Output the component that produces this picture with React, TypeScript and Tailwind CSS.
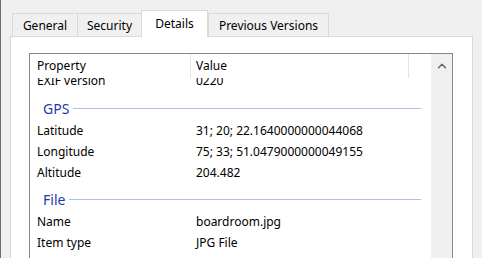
import { ChevronUp } from "lucide-react";

type Row = { label: string; value: string };

const gps: Row[] = [
  { label: "Latitude", value: "31; 20; 22.1640000000044068" },
  { label: "Longitude", value: "75; 33; 51.0479000000049155" },
  { label: "Altitude", value: "204.482" },
];

const file: Row[] = [
  { label: "Name", value: "boardroom.jpg" },
  { label: "Item type", value: "JPG File" },
];

function PropRow({ row }: { row: Row }) {
  return (
    <div className="flex h-[21px] items-center text-[12px] text-black">
      <div className="w-[161px] shrink-0 pl-[7px]">{row.label}</div>
      <div className="pl-[5px] whitespace-nowrap">{row.value}</div>
    </div>
  );
}

function Group({ title }: { title: string }) {
  return (
    <div className="flex h-[28px] items-center pt-[5px] pl-[13px] pr-[10px]">
      <span className="text-[14px] leading-[21px] text-[#1e3ca5]">{title}</span>
      <div className="ml-[4px] h-px flex-1 bg-[#aebfe6]" />
    </div>
  );
}

function Tab({ label, width, selected, last }: { label: string; width: string; selected?: boolean; last?: boolean }) {
  if (selected) {
    return (
      <div
        className={`relative z-10 -mb-px flex h-[27px] items-start justify-center border-x border-t border-[#d9d9d9] bg-white pt-[4px] text-[12px] ${width}`}
      >
        {label}
      </div>
    );
  }
  return (
    <div
      className={
        "flex h-[23px] items-center justify-center border-l border-t border-[#d9d9d9] bg-[#f0f0f0] pt-[2px] text-[12px] " +
        width +
        (last ? " border-r" : "")
      }
    >
      {label}
    </div>
  );
}

export default function App() {
  return (
    <div
      className="flex h-[258px] w-[482px] flex-col overflow-hidden border-l border-[#707070] bg-[#f0f0f0] pl-[9px] pr-[9px]"
      style={{ fontFamily: '"Noto Sans", "Open Sans", sans-serif' }}
    >
      {/* Tabs */}
      <div className="mt-[10px] flex h-[26px] items-end pl-[2px]">
        <Tab label="General" width="w-[65px]" />
        <Tab label="Security" width="w-[64px]" />
        <Tab label="Details" width="w-[67px]" selected />
        <Tab label="Previous Versions" width="w-[121px]" last />
      </div>

      {/* Panel */}
      <div className="flex-1 border border-[#d9d9d9] bg-white pl-[18px] pt-[16px]">
        <div className="flex h-[300px] w-[424px] border border-[#828790] bg-white">
          <div className="flex flex-1 flex-col">
            {/* Header */}
            <div className="flex h-[24px] items-center text-[12px] text-black">
              <div className="flex h-full w-[161px] shrink-0 items-center border-r border-[#e5e5e5] pl-[7px]">
                Property
              </div>
              <div className="flex h-full w-[218px] items-center border-r border-[#e5e5e5] pl-[5px]">Value</div>
            </div>
            {/* Body, scrolled so the first row sits under the header */}
            <div className="flex-1 overflow-hidden">
              <div className="-mt-[8px]">
                <PropRow row={{ label: "EXIF version", value: "0220" }} />
                <div className="h-px" />
                <Group title="GPS" />
                {gps.map((r) => (
                  <PropRow key={r.label} row={r} />
                ))}
                <Group title="File" />
                {file.map((r) => (
                  <PropRow key={r.label} row={r} />
                ))}
              </div>
            </div>
          </div>
          {/* Scrollbar */}
          <div className="flex w-[21px] shrink-0 justify-center bg-[#f0f0f0] pt-[5px]">
            <ChevronUp size={14} strokeWidth={2.2} className="text-[#606060]" />
          </div>
        </div>
      </div>
    </div>
  );
}
